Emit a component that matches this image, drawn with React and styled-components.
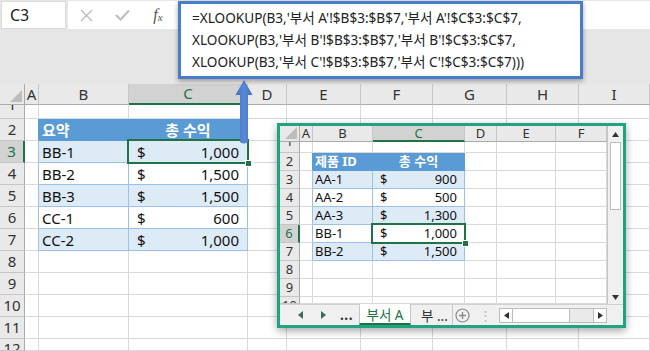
import React from 'react';
import styled, { createGlobalStyle, css } from 'styled-components';

const GREEN = '#217346';
const BLUE_HEAD = '#5B9BD5';
const BAND = '#DDEBF7';
const TABLE_LINE = '#9BC2E6';
const GRID_LINE = '#D9D9D9';
const FONT = `"Noto Sans", "Noto Sans CJK KR", sans-serif`;

const GlobalStyle = createGlobalStyle`
    html, body {
        margin: 0;
        padding: 0;
        background: #fff;
        overflow: hidden;
    }
`;

// sheet data
const MAIN = {
    size: 15,
    pad: 3,
    numPad: 8,
    headerH: 21,
    cols: [25, 14, 90, 119, 39, 74, 72, 74, 72, 71],
    letters: ['A', 'B', 'C', 'D', 'E', 'F', 'G', 'H', 'I'],
    rows: [
        { n: 1, h: 14, shift: -7 },
        ...[2, 3, 4, 5, 6, 7, 8, 9, 10, 11].map(n => ({ n, h: 22 })),
        { n: 12, h: 12, shift: 4 },
    ],
    selCol: 2,
    selRow: 3,
    table: {
        head: ['요약', '총 수익'],
        rows: {
            3: ['BB-1', '1,000'],
            4: ['BB-2', '1,500'],
            5: ['BB-3', '1,500'],
            6: ['CC-1', '600'],
            7: ['CC-2', '1,000'],
        },
    },
};

const INSET = {
    size: 13,
    pad: 2,
    numPad: 7,
    headerH: 16,
    cols: [20, 13, 60, 92, 32, 59, 51],
    letters: ['A', 'B', 'C', 'D', 'E', 'F'],
    rows: [
        { n: 1, h: 11, shift: -6 },
        ...[2, 3, 4, 5, 6, 7, 8, 9].map(n => ({ n, h: 18 })),
        { n: 10, h: 7, shift: 5 },
    ],
    selCol: 2,
    selRow: 6,
    table: {
        head: ['제품 ID', '총 수익'],
        rows: {
            3: ['AA-1', '900'],
            4: ['AA-2', '500'],
            5: ['AA-3', '1,300'],
            6: ['BB-1', '1,000'],
            7: ['BB-2', '1,500'],
        },
    },
};

const FORMULA = [
    "=XLOOKUP(B3,'부서 A'!$B$3:$B$7,'부서 A'!$C$3:$C$7,",
    "XLOOKUP(B3,'부서 B'!$B$3:$B$7,'부서 B'!$C$3:$C$7,",
    "XLOOKUP(B3,'부서 C'!$B$3:$B$7,'부서 C'!$C$3:$C$7)))",
];

const Sheet = ({ cfg }) => {
    const { cols, letters, rows, selCol, selRow, table, size, pad, numPad } = cfg;

    const renderCell = (row, i) => {
        const key = `${ row.n }-${ i }`;
        const isHead = row.n === 2;
        const data = table.rows[row.n];
        const inTable = isHead || Boolean(data);
        const band = data && row.n % 2 === 1;
        const selected = row.n === selRow && i === selCol;

        if (i === 0 && inTable) {
            return <Cell key={ key } $vline={ isHead ? BLUE_HEAD : TABLE_LINE } />;
        }
        if (i === 1 && isHead) {
            return (
                <Cell key={ key } $bg={ BLUE_HEAD } $vline={ BLUE_HEAD } $hline={ BLUE_HEAD }
                    $color='#fff' $bold $size={ size } $pad={ pad }>
                    { table.head[0] }
                </Cell>
            );
        }
        if (i === 2 && isHead) {
            return (
                <Cell key={ key } $bg={ BLUE_HEAD } $vline={ BLUE_HEAD } $hline={ BLUE_HEAD }
                    $color='#fff' $bold $align='center' $size={ size }>
                    { table.head[1] }
                </Cell>
            );
        }
        if (i === 1 && data) {
            return (
                <Cell key={ key } $bg={ band ? BAND : '#fff' } $vline={ TABLE_LINE }
                    $hline={ TABLE_LINE } $size={ size } $pad={ pad }>
                    { data[0] }
                </Cell>
            );
        }
        if (i === 2 && data) {
            return (
                <Cell key={ key } $bg={ band ? BAND : '#fff' } $vline={ TABLE_LINE }
                    $hline={ TABLE_LINE } $align='space-between' $size={ size }
                    $pad={ numPad } $selected={ selected }>
                    <span>$</span>
                    <span>{ data[1] }</span>
                </Cell>
            );
        }
        return <Cell key={ key } />;
    };

    return (
        <Grid $cols={ cols } $rows={ [cfg.headerH, ...rows.map(r => r.h)] }>
            <Corner />
            { letters.map((l, i) => (
                <ColHead key={ l } $sel={ i === selCol } $size={ size }>{ l }</ColHead>
            )) }
            { rows.map(row => (
                <React.Fragment key={ row.n }>
                    <RowHead $sel={ row.n === selRow } $size={ size }>
                        <RowLabel $shift={ row.shift || 0 }>{ row.n }</RowLabel>
                    </RowHead>
                    { letters.map((l, i) => renderCell(row, i)) }
                </React.Fragment>
            )) }
        </Grid>
    );
};

const Tri = ({ dir }) => (
    <svg width='6' height='8' viewBox='0 0 6 8'>
        { dir === 'left' ?
            <polygon points='5,0 5,8 0,4' fill='#3E6B57' /> :
            <polygon points='1,0 1,8 6,4' fill='#3E6B57' /> }
    </svg>
);

const App = () => (
    <>
        <GlobalStyle />
        <Page>
            <TopArea>
                <BarRow>
                    <NameBox>C3</NameBox>
                    <FormulaInput>
                        <IconSlot>
                            <svg width='13' height='13' viewBox='0 0 13 13'>
                                <path d='M1 1 L12 12 M12 1 L1 12' stroke='#BDBDBD' strokeWidth='1.4' />
                            </svg>
                        </IconSlot>
                        <IconSlot>
                            <svg width='15' height='12' viewBox='0 0 15 12'>
                                <path d='M1 6 L5.5 10.5 L14 1.5' stroke='#BDBDBD' strokeWidth='2' fill='none' />
                            </svg>
                        </IconSlot>
                        <IconSlot>
                            <Fx>f<sub>x</sub></Fx>
                        </IconSlot>
                    </FormulaInput>
                </BarRow>
            </TopArea>

            <Sheet cfg={ MAIN } />

            <FormulaPopup>
                { FORMULA.map(line => <FormulaLine key={ line }>{ line }</FormulaLine>) }
            </FormulaPopup>

            <Arrow width='20' height='66' viewBox='0 0 20 66'>
                <defs>
                    <linearGradient id='arrowFill' x1='0' x2='1' y1='0' y2='0'>
                        <stop offset='0' stopColor='#3F6FBF' />
                        <stop offset='0.5' stopColor='#5A8AD6' />
                        <stop offset='1' stopColor='#3F6FBF' />
                    </linearGradient>
                </defs>
                <path d='M10 1 L18.5 16 L14 16 L14 63 Q10 66 6 63 L6 16 L1.5 16 Z' fill='url(#arrowFill)' />
            </Arrow>

            <InsetWindow>
                <InsetBody>
                    <Sheet cfg={ INSET } />
                    <VScroll>
                        <ScrollBtn $h={ 16 }>
                            <svg width='7' height='5' viewBox='0 0 7 5'><polygon points='0,5 7,5 3.5,0' fill='#333' /></svg>
                        </ScrollBtn>
                        <VThumb />
                        <VTrack />
                        <ScrollBtn $h={ 14 }>
                            <svg width='7' height='5' viewBox='0 0 7 5'><polygon points='0,0 7,0 3.5,5' fill='#333' /></svg>
                        </ScrollBtn>
                    </VScroll>
                </InsetBody>
                <TabBar>
                    <NavBtn><Tri dir='left' /></NavBtn>
                    <NavBtn><Tri dir='right' /></NavBtn>
                    <Dots>...</Dots>
                    <Tab $active>부서 A</Tab>
                    <Tab>부 ...</Tab>
                    <AddBtn>
                        <svg width='15' height='15' viewBox='0 0 15 15'>
                            <circle cx='7.5' cy='7.5' r='6.5' stroke='#8A8A8A' strokeWidth='1.2' fill='none' />
                            <path d='M7.5 4 V11 M4 7.5 H11' stroke='#8A8A8A' strokeWidth='1.4' />
                        </svg>
                    </AddBtn>
                    <Splitter>⋮</Splitter>
                    <HScroll>
                        <HBtn>
                            <svg width='5' height='7' viewBox='0 0 5 7'><polygon points='5,0 5,7 0,3.5' fill='#333' /></svg>
                        </HBtn>
                        <HThumb />
                        <HTrack />
                        <HBtn>
                            <svg width='5' height='7' viewBox='0 0 5 7'><polygon points='0,0 0,7 5,3.5' fill='#333' /></svg>
                        </HBtn>
                    </HScroll>
                </TabBar>
            </InsetWindow>
        </Page>
    </>
);

export default App;

const Page = styled.div`
    position: relative;
    width: 650px;
    height: 351px;
    overflow: hidden;
    background: #fff;
    font-family: ${ FONT };
`;

const TopArea = styled.div`
    height: 84px;
    box-sizing: border-box;
    padding-top: 1px;
    background: #E6E6E6;
`;

const BarRow = styled.div`
    display: flex;
    gap: 2px;
    height: 28px;
    padding-left: 1px;
`;

const NameBox = styled.div`
    width: 65px;
    box-sizing: border-box;
    display: flex;
    align-items: center;
    padding-left: 8px;
    background: #fff;
    border: 1px solid #DADADA;
    font-size: 16px;
    color: #222;
`;

const FormulaInput = styled.div`
    flex: 1;
    display: flex;
    align-items: center;
    background: #fff;
`;

const IconSlot = styled.div`
    width: 36px;
    display: flex;
    justify-content: center;
    align-items: center;
`;

const Fx = styled.span`
    font-family: "Liberation Serif", serif;
    font-style: italic;
    font-size: 16px;
    color: #555;

    sub {
        font-size: 11px;
        vertical-align: -1px;
    }
`;

const FormulaPopup = styled.div`
    position: absolute;
    left: 178px;
    top: 1px;
    width: 405px;
    height: 78px;
    box-sizing: border-box;
    padding: 3px 0 0 11px;
    background: #fff;
    border: 3px solid #4A7DC9;
    box-shadow: 0 2px 5px rgba(0, 0, 0, 0.35);
    font-size: 13.6px;
    line-height: 22px;
    color: #222;
    white-space: nowrap;
    z-index: 5;
`;

const FormulaLine = styled.div``;

const Arrow = styled.svg`
    position: absolute;
    left: 234px;
    top: 79px;
    z-index: 4;
`;

const Grid = styled.div`
    display: grid;
    grid-template-columns: ${ p => p.$cols.map(c => `${ c }px`).join(' ') };
    grid-template-rows: ${ p => p.$rows.map(r => `${ r }px`).join(' ') };
    overflow: hidden;
`;

const Corner = styled.div`
    position: relative;
    background: #E9E9E9;
    border-right: 1px solid #ABABAB;
    border-bottom: 1px solid #ABABAB;
    box-sizing: border-box;

    &::after {
        content: '';
        position: absolute;
        right: 2px;
        bottom: 2px;
        border-left: 12px solid transparent;
        border-bottom: 12px solid #BDBDBD;
    }
`;

const ColHead = styled.div`
    box-sizing: border-box;
    display: flex;
    align-items: center;
    justify-content: center;
    background: ${ p => p.$sel ? '#D2D2D2' : '#E9E9E9' };
    color: ${ p => p.$sel ? GREEN : '#333' };
    border-right: 1px solid #C6C6C6;
    border-bottom: ${ p => p.$sel ? `2px solid ${ GREEN }` : '1px solid #ABABAB' };
    font-size: ${ p => p.$size }px;
    line-height: 1;
    overflow: hidden;
`;

const RowHead = styled.div`
    box-sizing: border-box;
    display: flex;
    align-items: center;
    justify-content: center;
    background: ${ p => p.$sel ? '#D2D2D2' : '#E9E9E9' };
    color: ${ p => p.$sel ? GREEN : '#333' };
    border-right: ${ p => p.$sel ? `2px solid ${ GREEN }` : '1px solid #ABABAB' };
    border-bottom: 1px solid #C6C6C6;
    font-size: ${ p => p.$size }px;
    line-height: 1;
    overflow: hidden;
`;

const RowLabel = styled.span`
    position: relative;
    top: ${ p => p.$shift }px;
`;

const Cell = styled.div`
    position: relative;
    box-sizing: border-box;
    display: flex;
    align-items: center;
    justify-content: ${ p => p.$align || 'flex-start' };
    padding: 0 ${ p => p.$pad || 0 }px;
    background: ${ p => p.$bg || '#fff' };
    color: ${ p => p.$color || '#111' };
    font-weight: ${ p => p.$bold ? 700 : 400 };
    font-size: ${ p => p.$size || 15 }px;
    line-height: 1.2;
    border-right: 1px solid ${ p => p.$vline || GRID_LINE };
    border-bottom: 1px solid ${ p => p.$hline || GRID_LINE };
    white-space: nowrap;

    ${ p => p.$selected && css`
        z-index: 2;

        &::after {
            content: '';
            position: absolute;
            left: -2px;
            top: -2px;
            right: -2px;
            bottom: -2px;
            border: 2px solid ${ GREEN };
        }

        &::before {
            content: '';
            position: absolute;
            right: -5px;
            bottom: -5px;
            width: 5px;
            height: 5px;
            background: ${ GREEN };
            border: 1px solid #fff;
            z-index: 3;
        }
    ` }
`;

const InsetWindow = styled.div`
    position: absolute;
    left: 277px;
    top: 123px;
    width: 349px;
    height: 205px;
    box-sizing: border-box;
    display: flex;
    flex-direction: column;
    background: #fff;
    border: 3px solid #1FA381;
    box-shadow: 0 3px 8px rgba(0, 0, 0, 0.35);
    z-index: 3;
    overflow: hidden;
`;

const InsetBody = styled.div`
    display: flex;
    height: 178px;
`;

const VScroll = styled.div`
    width: 16px;
    display: flex;
    flex-direction: column;
    background: #F0F0F0;
    border-left: 1px solid #C6C6C6;
    box-sizing: border-box;
`;

const ScrollBtn = styled.div`
    height: ${ p => p.$h }px;
    display: flex;
    align-items: center;
    justify-content: center;
    background: #F0F0F0;
`;

const VThumb = styled.div`
    height: 66px;
    margin: 0 2px;
    background: #fff;
    border: 1px solid #BDBDBD;
`;

const VTrack = styled.div`
    flex: 1;
`;

const TabBar = styled.div`
    display: flex;
    align-items: stretch;
    height: 21px;
    padding-left: 10px;
    background: #F0F0F0;
    border-top: 1px solid #D0D0D0;
    box-sizing: border-box;
    font-size: 13.5px;
`;

const NavBtn = styled.div`
    width: 22px;
    display: flex;
    align-items: center;
    justify-content: center;
`;

const Dots = styled.div`
    width: 25px;
    display: flex;
    align-items: center;
    justify-content: center;
    color: #333;
    font-weight: 700;
    letter-spacing: 0.5px;
`;

const Tab = styled.div`
    box-sizing: border-box;
    width: ${ p => p.$active ? 52 : 42 }px;
    display: flex;
    align-items: center;
    justify-content: ${ p => p.$active ? 'center' : 'flex-start' };
    padding-left: ${ p => p.$active ? 0 : 10 }px;
    margin-top: ${ p => p.$active ? -1 : 0 }px;
    background: ${ p => p.$active ? '#fff' : 'transparent' };
    color: ${ p => p.$active ? GREEN : '#333' };
    border-left: ${ p => p.$active ? '1px solid #C6C6C6' : 'none' };
    border-right: 1px solid #C6C6C6;
    border-bottom: ${ p => p.$active ? `2px solid ${ GREEN }` : 'none' };
    white-space: nowrap;
`;

const AddBtn = styled.div`
    width: 18px;
    display: flex;
    align-items: center;
    justify-content: center;
`;

const Splitter = styled.div`
    width: 28px;
    display: flex;
    align-items: center;
    justify-content: center;
    color: #BDBDBD;
    font-size: 13px;
`;

const HScroll = styled.div`
    width: 108px;
    height: 15px;
    align-self: center;
    display: flex;
    box-sizing: border-box;
    border: 1px solid #BDBDBD;
    background: #EAEAEA;
`;

const HBtn = styled.div`
    width: 12px;
    display: flex;
    align-items: center;
    justify-content: center;
    background: #fff;
`;

const HThumb = styled.div`
    width: 56px;
    background: #fff;
    border-left: 1px solid #BDBDBD;
    border-right: 1px solid #BDBDBD;
`;

const HTrack = styled.div`
    flex: 1;
    border-right: 1px solid #BDBDBD;
`;
